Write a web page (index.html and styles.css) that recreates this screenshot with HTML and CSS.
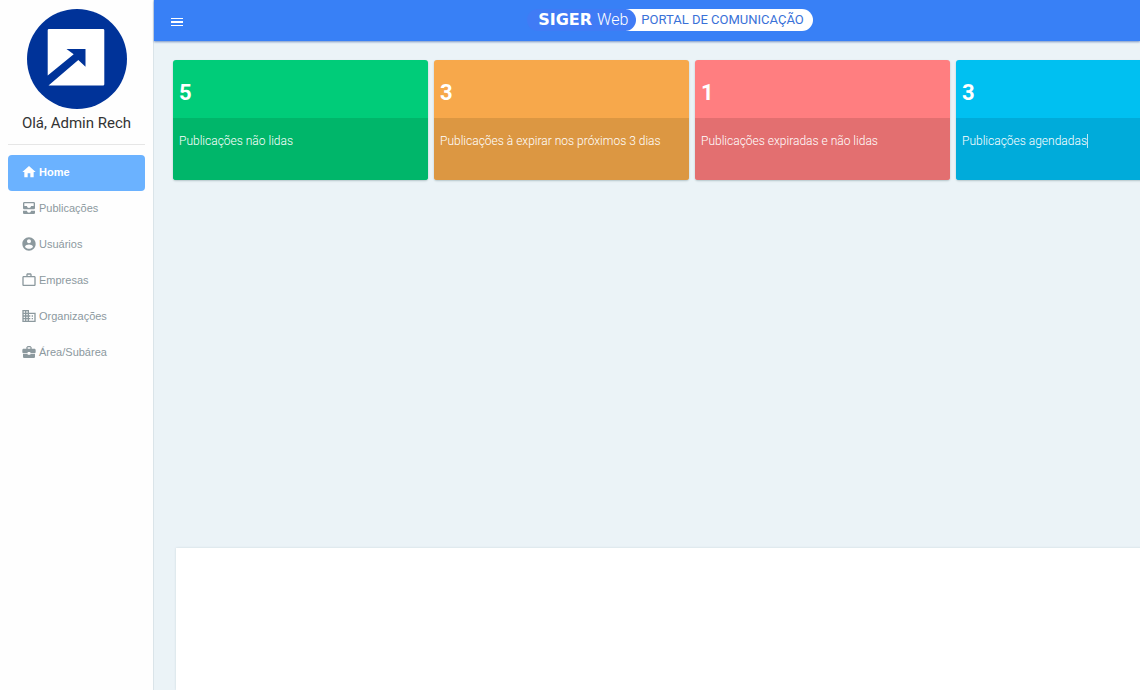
FILE: index.html
```html
<!DOCTYPE html>
<html lang="pt-BR">
<head>
<meta charset="utf-8">
<meta name="viewport" content="width=device-width, initial-scale=1">
<title>SIGER Web - Portal de Comunicação</title>
<link rel="stylesheet" href="styles.css">
</head>
<body>
<div class="app">
  <aside class="sidebar">
    <div class="profile">
      <svg class="avatar" viewBox="0 0 100 100" aria-hidden="true">
        <circle cx="50" cy="50" r="50" fill="#003399"/>
        <path d="M22 20h54q1.300 0 1.300 1.300v54q0 1.300-1.300 1.300H21.500L51.300 51l7.200 6.700V40H39.500l7.200 5.300L20.700 66.500V21.300q0-1.300 1.300-1.300z" fill="#fff"/>
      </svg>
      <p class="greeting">Olá, Admin Rech</p>
    </div>
    <nav class="menu">
      <a class="menu-item active" href="#"><svg class="icon" viewBox="0 0 24 24"><path d="M10 20v-6h4v6h5v-8h3L12 3 2 12h3v8z"/></svg>Home</a>
      <a class="menu-item" href="#"><svg class="icon" viewBox="0 0 24 24"><path d="M19 3H5c-1.100 0-2 .9-2 2v7c0 1.100.9 2 2 2h14c1.100 0 2-.9 2-2V5c0-1.100-.9-2-2-2zm0 6h-4c0 1.620-1.380 3-3 3s-3-1.380-3-3H5V5h14v4zm-4 7h6v3c0 1.100-.9 2-2 2H5c-1.100 0-2-.9-2-2v-3h6c0 1.660 1.340 3 3 3s3-1.340 3-3z"/></svg>Publicações</a>
      <a class="menu-item" href="#"><svg class="icon" viewBox="0 0 24 24"><path d="M12 2C6.480 2 2 6.480 2 12s4.480 10 10 10 10-4.480 10-10S17.520 2 12 2zm0 3c1.660 0 3 1.340 3 3s-1.340 3-3 3-3-1.340-3-3 1.340-3 3-3zm0 14.200c-2.500 0-4.710-1.280-6-3.220.03-1.990 4-3.080 6-3.080 1.990 0 5.970 1.090 6 3.080-1.290 1.940-3.500 3.220-6 3.220z"/></svg>Usuários</a>
      <a class="menu-item" href="#"><svg class="icon" viewBox="0 0 24 24"><path d="M14 6V4h-4v2h4zM4 8v11h16V8H4zm16-2c1.110 0 2 .89 2 2v11c0 1.110-.89 2-2 2H4c-1.110 0-2-.89-2-2V8c0-1.110.89-2 2-2h4V4c0-1.110.89-2 2-2h4c1.110 0 2 .89 2 2v2h4z"/></svg>Empresas</a>
      <a class="menu-item" href="#"><svg class="icon" viewBox="0 0 24 24"><path d="M12 7V3H2v18h20V7H12zM6 19H4v-2h2v2zm0-4H4v-2h2v2zm0-4H4V9h2v2zm0-4H4V5h2v2zm4 12H8v-2h2v2zm0-4H8v-2h2v2zm0-4H8V9h2v2zm0-4H8V5h2v2zm10 12h-8v-2h2v-2h-2v-2h2v-2h-2V9h8v10zm-2-8h-2v2h2v-2zm0 4h-2v2h2v-2z"/></svg>Organizações</a>
      <a class="menu-item" href="#"><svg class="icon" viewBox="0 0 24 24"><path d="M10 16v-1H3.010L3 19c0 1.110.89 2 2 2h14c1.110 0 2-.89 2-2v-4h-7v1h-4zm10-9h-4.010V5l-2-2h-4l-2 2v2H4c-1.100 0-2 .9-2 2v3c0 1.110.89 2 2 2h6v-2h4v2h6c1.100 0 2-.9 2-2V9c0-1.100-.9-2-2-2zm-6 0h-4V5h4v2z"/></svg>Área/Subárea</a>
    </nav>
  </aside>
  <div class="page">
    <header class="topbar">
      <button class="menu-toggle" type="button" aria-label="Menu"><svg class="toggle-icon" viewBox="0 0 12 8"><path d="M0 0h12v1H0zM0 3h12v2H0zM0 7h12v1H0z"/></svg></button>
      <div class="brand">
        <span class="brand-name"><b class="brand-siger">SIGER</b><span class="brand-web">Web</span></span>
        <span class="brand-portal">PORTAL DE COMUNICAÇÃO</span>
      </div>
    </header>
    <main class="content">
      <section class="cards">
        <article class="card green"><strong class="count">5</strong><p class="label">Publicações não lidas</p></article>
        <article class="card orange"><strong class="count">3</strong><p class="label">Publicações à expirar nos próximos 3 dias</p></article>
        <article class="card red"><strong class="count">1</strong><p class="label">Publicações expiradas e não lidas</p></article>
        <article class="card blue"><strong class="count">3</strong><p class="label"><span class="caret">Publicações agendadas</span></p></article>
      </section>
      <section class="panel"></section>
    </main>
  </div>
</div>
</body>
</html>
```
FILE: styles.css
```css
* { box-sizing: border-box; }

body {
  margin: 0;
  background: #ebf3f7;
  font-family: Roboto, "Liberation Sans", sans-serif;
}

.app {
  display: grid;
  grid-template-columns: 154px minmax(0, 1fr);
  min-height: 100vh;
  overflow: hidden;
}

.sidebar {
  padding: 9px 8px;
  background: #fefefe;
  border-right: 1px solid #dae4e9;
}

.profile {
  display: flex;
  flex-direction: column;
  align-items: center;
  padding-bottom: 11px;
  border-bottom: 1px solid #e6e6e6;
}

.avatar { width: 100px; height: 100px; }

.greeting {
  margin: 4px 0 0;
  color: #333;
  font-size: 15px;
  line-height: 20px;
  white-space: nowrap;
}

.menu { display: grid; padding-top: 10px; }

.menu-item {
  display: flex;
  align-items: center;
  gap: 2px;
  height: 36px;
  padding: 0 0 2px 13px;
  border-radius: 4px;
  color: #8c999e;
  font-family: "Liberation Sans", Arial, sans-serif;
  font-size: 11px;
  text-decoration: none;
}

.menu-item.active { background: #6bb2ff; color: #fff; font-weight: bold; }

.icon { width: 16px; height: 16px; fill: currentColor; }

.page { display: flex; flex-direction: column; }

.topbar {
  display: flex;
  align-items: center;
  height: 41px;
  padding-left: 17px;
  background: #3880f6;
  box-shadow: 0 1px 2px #7894c4;
}

.menu-toggle {
  display: flex;
  padding: 2px 17px 0 0;
  border: 0;
  background: none;
}

.toggle-icon { width: 12px; height: 8px; fill: #fff; }

.brand {
  display: flex;
  align-items: center;
  margin: 0 auto;
  padding-bottom: 1px;
  line-height: 22px;
  white-space: nowrap;
}

.brand-name {
  display: flex;
  gap: 5px;
  padding: 0 8px 0 11px;
  border-radius: 11px;
  background: #407bf5;
  color: #fff;
  z-index: 1;
}

.brand-siger {
  font-family: "DejaVu Sans", sans-serif;
  font-size: 16px;
}

.brand-web { font-size: 16px; font-weight: 300; }

.brand-portal {
  margin-left: -10px;
  padding: 0 9px 0 15px;
  border-radius: 0 11px 11px 0;
  background: #fff;
  color: #3971d8;
  font-size: 13px;
}

.content {
  display: flex;
  flex: 1;
  flex-direction: column;
  padding: 19px 19px 0;
}

.cards {
  display: grid;
  grid-template-columns: repeat(4, minmax(255px, 1fr));
  gap: 6px;
}

.card {
  overflow: hidden;
  border-radius: 3px;
  box-shadow: 0 1px 2px #b4c4c8;
  color: #fff;
}

.count {
  display: block;
  padding: 19px 6px 11px;
  font-size: 22px;
  line-height: 28px;
}

.label {
  height: 62px;
  margin: 0;
  padding: 14px 6px;
  font-size: 12px;
  font-weight: 300;
  line-height: 18px;
}

.green { background: #00cc79; }
.green .label { background: #00b66a; }
.orange { background: #f7a84b; }
.orange .label { background: #dc9742; }
.red { background: #ff7e80; }
.red .label { background: #e36f70; }
.blue { background: #00c0f1; }
.blue .label { background: #00abda; }

.caret { border-right: 1px solid #b8e8f6; }

.panel {
  flex: 1;
  min-width: 1032px;
  min-height: 142px;
  margin: 368px 0 0 3px;
  background: #fff;
  box-shadow: 0 0 2px #c9d6dc;
}
```
